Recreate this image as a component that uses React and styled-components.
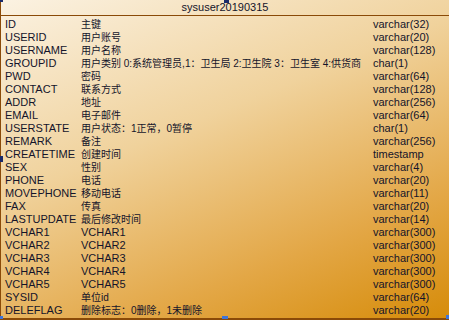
import React from "react";
import styled, { createGlobalStyle } from "styled-components";

const Global = createGlobalStyle`
  html, body { margin: 0; padding: 0; background: #ffffff; }
  body { width: 449px; height: 320px; overflow: hidden; }
`;

const rows = [
  ["ID", "主键", "varchar(32)"],
  ["USERID", "用户账号", "varchar(20)"],
  ["USERNAME", "用户名称", "varchar(128)"],
  ["GROUPID", "用户类别 0:系统管理员,1：卫生局 2:卫生院 3：卫生室 4:供货商", "char(1)"],
  ["PWD", "密码", "varchar(64)"],
  ["CONTACT", "联系方式", "varchar(128)"],
  ["ADDR", "地址", "varchar(256)"],
  ["EMAIL", "电子邮件", "varchar(64)"],
  ["USERSTATE", "用户状态：1正常，0暂停", "char(1)"],
  ["REMARK", "备注", "varchar(256)"],
  ["CREATETIME", "创建时间", "timestamp"],
  ["SEX", "性别", "varchar(4)"],
  ["PHONE", "电话", "varchar(20)"],
  ["MOVEPHONE", "移动电话", "varchar(11)"],
  ["FAX", "传真", "varchar(20)"],
  ["LASTUPDATE", "最后修改时间", "varchar(14)"],
  ["VCHAR1", "VCHAR1", "varchar(300)"],
  ["VCHAR2", "VCHAR2", "varchar(300)"],
  ["VCHAR3", "VCHAR3", "varchar(300)"],
  ["VCHAR4", "VCHAR4", "varchar(300)"],
  ["VCHAR5", "VCHAR5", "varchar(300)"],
  ["SYSID", "单位id", "varchar(64)"],
  ["DELEFLAG", "删除标志：0删除，1未删除", "varchar(20)"],
];

const Entity = styled.div`
  position: relative;
  width: 449px;
  height: 320px;
  box-sizing: border-box;
  border-left: 1px solid #8a4a08;
  border-bottom: 2px solid #8a4a08;
  background: linear-gradient(158deg, #fbf2e2 0%, #f0d29c 40%, #e3a746 75%, #d68c0a 100%);
  font-family: "Liberation Sans", "Noto Sans CJK SC", sans-serif;
  font-size: 11px;
  color: #14142a;
  display: flex;
  flex-direction: column;
`;

const Title = styled.div`
  height: 15px;
  line-height: 15px;
  border-bottom: 1px solid #8a4a08;
  text-align: center;
  font-size: 11px;
`;

const Body = styled.div`
  padding-top: 2px;
  display: flex;
  flex-direction: column;
`;

const Row = styled.div`
  display: grid;
  grid-template-columns: 76px 292px 1fr;
  height: 13px;
  line-height: 13px;
  padding-left: 4px;
  white-space: nowrap;
`;

const Cell = styled.span`
  overflow: visible;
`;

const Comment = styled.span`
  font-size: ${(p) => (p.$latin ? "11px" : "10px")};
`;

const Handle = styled.div`
  position: absolute;
  width: ${(p) => p.$w || 4}px;
  height: ${(p) => p.$h || 3}px;
  background: ${(p) => p.$c || "#3f74d8"};
`;

export default function App() {
  return (
    <>
      <Global />
      <Entity>
        <Title>sysuser20190315</Title>
        <Body>
          {rows.map(([n, c, t]) => (
            <Row key={n}>
              <Cell>{n}</Cell>
              <Cell>
                <Comment $latin={/^[\x00-\x7f]*$/.test(c)}>{c}</Comment>
              </Cell>
              <Cell>{t}</Cell>
            </Row>
          ))}
        </Body>
        <Handle style={{ left: -1, top: 0 }} $w={3} $h={2} $c="#1a2a6a" />
        <Handle style={{ left: 223, top: 0 }} $w={5} $h={3} $c="#1a2a6a" />
        <Handle style={{ left: -1, top: 156 }} $w={3} $h={6} $c="#1a2a6a" />
        <Handle style={{ left: -1, top: 316 }} $w={3} $h={3} />
        <Handle style={{ left: 221, top: 316 }} $w={6} $h={3} />
        <Handle style={{ left: 445, top: 315 }} $w={3} $h={4} />
      </Entity>
    </>
  );
}
